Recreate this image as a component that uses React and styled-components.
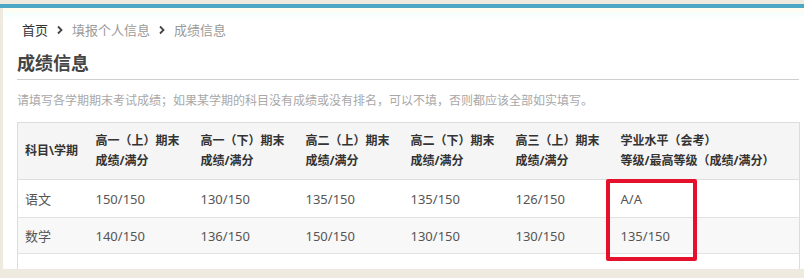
import React from 'react'
import styled, { createGlobalStyle } from 'styled-components'

const GlobalStyle = createGlobalStyle`
  html, body {
    margin: 0;
    padding: 0;
    background: #eeeadf;
  }
  body {
    font-family: "Noto Sans", "Noto Sans CJK SC", sans-serif;
    color: #333;
  }
`

const Page = styled.div`
  width: 804px;
  height: 278px;
  overflow: hidden;
  padding-top: 4px;
  box-sizing: border-box;
  background: #eeeadf;
`

const TopStripe = styled.div`
  height: 4px;
  background: #4ba7c3;
`

const Panel = styled.div`
  margin-left: 3px;
  height: 261px;
  overflow: hidden;
  box-sizing: border-box;
  padding: 12px 5px 0 14px;
  background: linear-gradient(#fffcf2 0, #fffcf2 4px, #f4feff 5px, #ffffff 11px);
`

const Breadcrumb = styled.div`
  display: flex;
  align-items: center;
  gap: 8px;
  padding-left: 5px;
  font-size: 13px;
  line-height: 20px;
`

const Crumb = styled.span`
  color: ${(p) => (p.$active ? '#333' : '#9a9a9a')};
`

const Chevron = styled.svg`
  width: 8px;
  height: 10px;
`

const Title = styled.h2`
  margin: 10px 0 0;
  padding-bottom: 3px;
  border-bottom: 1px solid #cfcfcf;
  font-size: 18px;
  line-height: 26px;
  font-weight: bold;
  color: #444;
`

const Note = styled.p`
  margin: 12px 0 0;
  font-size: 12px;
  line-height: 18px;
  color: #a8a8a8;
`

const TableWrap = styled.div`
  position: relative;
  margin-top: 12px;
`

const Table = styled.table`
  width: 782px;
  table-layout: fixed;
  border-collapse: collapse;
  border: 1px solid #dcdcdc;
`

const HeadCell = styled.th`
  text-align: left;
  vertical-align: middle;
  padding: 8px 4px 8px 7px;
  font-size: 12px;
  line-height: 20px;
  font-weight: bold;
  color: #333;
  background: #f5f5f5;
  border-bottom: 1px solid #dedede;
  white-space: nowrap;
`

const Row = styled.tr`
  background: ${(p) => (p.$alt ? '#f8f8f8' : '#fff')};
  border-bottom: 1px solid #e2e2e2;
`

const Cell = styled.td`
  height: ${(p) => p.$h || 37}px;
  padding: 0 4px 0 7px;
  font-size: 13px;
  color: #555;
  vertical-align: middle;
`

const Highlight = styled.div`
  position: absolute;
  left: 589px;
  top: 57px;
  width: 91px;
  height: 82px;
  box-sizing: border-box;
  border: 4px solid #e5102b;
  border-radius: 2px;
  pointer-events: none;
`

const Arrow = () => (
  <Chevron viewBox="0 0 8 10">
    <path d="M2 1.5 L5.5 5 L2 8.5" fill="none" stroke="#444" strokeWidth="1.8" />
  </Chevron>
)

const cols = [71, 105, 105, 105, 105, 105, 186]

const heads = [
  ['科目\\学期'],
  ['高一（上）期末', '成绩/满分'],
  ['高一（下）期末', '成绩/满分'],
  ['高二（上）期末', '成绩/满分'],
  ['高二（下）期末', '成绩/满分'],
  ['高三（上）期末', '成绩/满分'],
  ['学业水平（会考）', '等级/最高等级（成绩/满分）'],
]

const rows = [
  ['语文', '150/150', '130/150', '135/150', '135/150', '126/150', 'A/A'],
  ['数学', '140/150', '136/150', '150/150', '130/150', '130/150', '135/150'],
]

export default function App() {
  return (
    <Page>
      <GlobalStyle />
      <TopStripe />
      <Panel>
        <Breadcrumb>
          <Crumb $active>首页</Crumb>
          <Arrow />
          <Crumb>填报个人信息</Crumb>
          <Arrow />
          <Crumb>成绩信息</Crumb>
        </Breadcrumb>
        <Title>成绩信息</Title>
        <Note>
          请填写各学期期末考试成绩；如果某学期的科目没有成绩或没有排名，可以不填，否则都应该全部如实填写。
        </Note>
        <TableWrap>
          <Table>
            <colgroup>
              {cols.map((w, i) => (
                <col key={i} style={{ width: w }} />
              ))}
            </colgroup>
            <thead>
              <tr>
                {heads.map((h, i) => (
                  <HeadCell key={i}>
                    {h.map((line, j) => (
                      <div key={j}>{line}</div>
                    ))}
                  </HeadCell>
                ))}
              </tr>
            </thead>
            <tbody>
              {rows.map((r, i) => (
                <Row key={i} $alt={i % 2 === 1}>
                  {r.map((c, j) => (
                    <Cell key={j} $h={i === 0 ? 37 : 35}>{c}</Cell>
                  ))}
                </Row>
              ))}
              <Row>
                {cols.map((_, j) => (
                  <Cell key={j} $h={36} />
                ))}
              </Row>
            </tbody>
          </Table>
          <Highlight />
        </TableWrap>
      </Panel>
    </Page>
  )
}
